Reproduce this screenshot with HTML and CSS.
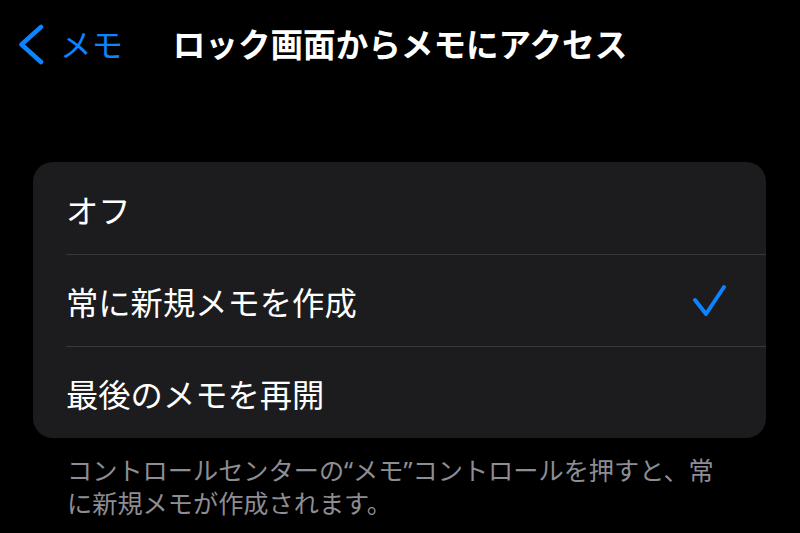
FILE: index.html
```html
<!DOCTYPE html>
<html lang="ja">
<head>
<meta charset="utf-8">
<link rel="stylesheet" href="styles.css">
</head>
<body>
<div class="screen">
  <header class="nav">
    <div class="back">
      <svg class="chev" width="26" height="42" viewBox="0 0 26 42"><path d="M23 3 L3.5 20.5 L23 38" fill="none" stroke="#0a84ff" stroke-width="4.5" stroke-linecap="round" stroke-linejoin="round"/></svg>
      <span class="back-label">メモ</span>
    </div>
    <h1 class="title">ロック画面からメモにアクセス</h1>
    <div class="spacer"></div>
  </header>
  <section class="card">
    <div class="row"><span class="label">オフ</span></div>
    <div class="row"><span class="label">常に新規メモを作成</span>
      <svg class="check" width="34" height="34" viewBox="0 0 34 34"><path d="M3 16 L14 30 L32 3" fill="none" stroke="#0a84ff" stroke-width="3.9" stroke-linecap="round" stroke-linejoin="round"/></svg>
    </div>
    <div class="row"><span class="label">最後のメモを再開</span></div>
  </section>
  <p class="footer">コントロールセンターの“メモ”コントロールを押すと、常に新規メモが作成されます。</p>
</div>
</body>
</html>
```
FILE: styles.css
```css
* { box-sizing: border-box; }
html, body { margin: 0; padding: 0; background: #000; }
body {
  width: 800px;
  height: 533px;
  overflow: hidden;
  font-family: "Noto Sans", "Noto Sans CJK JP", sans-serif;
  color: #fff;
}
.screen { width: 800px; height: 533px; }
.nav {
  height: 90px;
  display: grid;
  grid-template-columns: 1fr auto 1fr;
  align-items: center;
}
.back {
  display: flex;
  align-items: center;
  padding-left: 18px;
  gap: 16px;
  color: #0a84ff;
}
.chev { display: block; }
.back-label {
  font-size: 31.5px;
  line-height: 40px;
  font-weight: 400;
}
.title {
  margin: 0;
  font-size: 32.6px;
  line-height: 40px;
  font-weight: 700;
  white-space: nowrap;
}
.card {
  margin: 72px 34px 0 33px;
  background: #1c1c1e;
  border-radius: 20px;
  overflow: hidden;
}
.row {
  height: 92px;
  margin-left: 33px;
  padding-right: 40px;
  display: flex;
  align-items: center;
  justify-content: space-between;
}
.row + .row { border-top: 1px solid #38383a; }
.label {
  font-size: 32.3px;
  line-height: 40px;
  padding-top: 3px;
}
.check { display: block; }
.footer {
  margin: 16px 0 0 0;
  padding-left: 67px;
  width: 722px;
  font-size: 25.2px;
  line-height: 33px;
  color: #8d8d93;
}
```
